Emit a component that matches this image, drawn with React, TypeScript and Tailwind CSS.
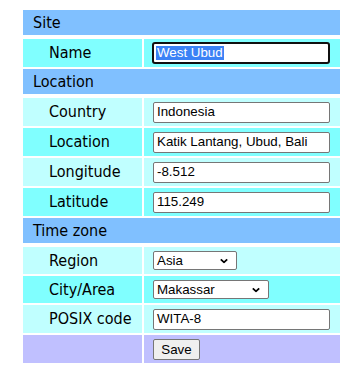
const label = "font-['DejaVu_Sans_Condensed','DejaVu_Sans',sans-serif] text-[16px] text-black";
const ctrl = "font-['Liberation_Sans',Arial,sans-serif] text-[13.33px] text-black";

function Chevron() {
  return (
    <svg width="8" height="5" viewBox="0 0 8 5" className="absolute right-[8px] top-1/2 -translate-y-1/2">
      <path d="M0.8 0.8 L4 3.8 L7.2 0.8" fill="none" stroke="#000" strokeWidth="1.8" />
    </svg>
  );
}

function Header({ title, gapAfter = true }: { title: string; gapAfter?: boolean }) {
  return (
    <div className={`h-[25px] w-[317px] bg-[#80c0ff] flex items-center pl-[10px] ${gapAfter ? "mb-[2px]" : ""} ${label}`}>
      {title}
    </div>
  );
}

function Row({ name, bg, h = "h-[28px]", children }: { name: string; bg: string; h?: string; children: React.ReactNode }) {
  return (
    <div className={`grid grid-cols-[119px_196px] gap-x-[2px] ${h}`}>
      <div className={`${bg} flex items-center pl-[26px] ${label}`}>{name}</div>
      <div className={`${bg} flex items-center pl-[9px]`}>{children}</div>
    </div>
  );
}

function TextBox({ value }: { value: string }) {
  return (
    <div className={`h-[21px] w-[177px] bg-white border border-[#767676] rounded-[2px] flex items-center px-[3px] ${ctrl}`}>
      {value}
    </div>
  );
}

function Select({ value, w }: { value: string; w: string }) {
  return (
    <div className={`relative h-[19px] ${w} bg-white border border-[#767676] rounded-[2px] flex items-center px-[3px] ${ctrl}`}>
      {value}
      <Chevron />
    </div>
  );
}

export default function App() {
  return (
    <div className="min-h-screen bg-white pt-[10px] pl-[23px]">
      <div className="flex flex-col gap-[2px] w-[317px]">
        <Header title="Site" />
        <Row name="Name" bg="bg-[#80ffff]">
          <div className={`h-[22px] w-[178px] -ml-[1px] bg-white border-[2px] border-[#101010] rounded-[3px] flex items-center px-[2px] ${ctrl}`}>
            <span className="bg-[#3b82f6] text-white px-[1px] leading-[14px]">West Ubud</span>
          </div>
        </Row>
        <Header title="Location" />
        <Row name="Country" bg="bg-[#c0ffff]">
          <TextBox value="Indonesia" />
        </Row>
        <Row name="Location" bg="bg-[#80ffff]">
          <TextBox value="Katik Lantang, Ubud, Bali" />
        </Row>
        <Row name="Longitude" bg="bg-[#c0ffff]">
          <TextBox value="-8.512" />
        </Row>
        <Row name="Latitude" bg="bg-[#80ffff]">
          <TextBox value="115.249" />
        </Row>
        <Header title="Time zone" />
        <Row name="Region" bg="bg-[#c0ffff]" h="h-[27px]">
          <Select value="Asia" w="w-[84px]" />
        </Row>
        <Row name="City/Area" bg="bg-[#80ffff]" h="h-[27px]">
          <Select value="Makassar" w="w-[116px]" />
        </Row>
        <Row name="POSIX code" bg="bg-[#c0ffff]">
          <TextBox value="WITA-8" />
        </Row>
        <Row name="" bg="bg-[#c0c0ff]">
          <button className={`h-[21px] w-[47px] bg-[#efefef] border border-[#767676] rounded-[2px] ${ctrl}`}>
            Save
          </button>
        </Row>
      </div>
    </div>
  );
}
